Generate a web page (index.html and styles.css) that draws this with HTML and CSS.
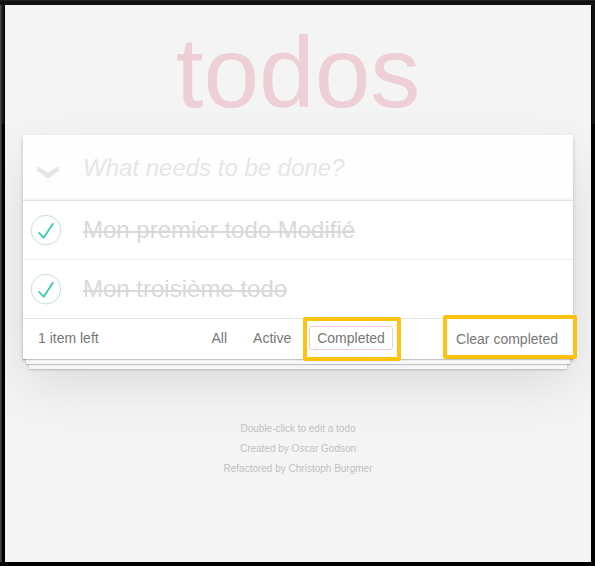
FILE: index.html
```html
<!DOCTYPE html>
<html lang="fr">
<head>
<meta charset="utf-8">
<title>todos</title>
<link rel="stylesheet" href="styles.css">
</head>
<body>
<div class="frame">
<div class="page">
  <h1>todos</h1>
  <section class="todoapp">
    <header class="new-todo">
      <svg class="toggle-all" viewBox="0 0 22 13"><path d="M0 0 11 6.5 22 0V5L11 12.5 0 5Z"/></svg>
      <span>What needs to be done?</span>
    </header>
    <ul class="todo-list">
      <li>
        <svg class="check" viewBox="-10 -18 100 135"><circle cx="50" cy="50" r="50"/><path d="M72 25L42 71 27 56l-4 4 20 20 34-52z"/></svg>
        <label>Mon premier todo Modifié</label>
      </li>
      <li>
        <svg class="check" viewBox="-10 -18 100 135"><circle cx="50" cy="50" r="50"/><path d="M72 25L42 71 27 56l-4 4 20 20 34-52z"/></svg>
        <label>Mon troisième todo</label>
      </li>
    </ul>
    <footer class="footer">
      <span class="count">1 item left</span>
      <nav class="filters">
        <a>All</a>
        <a>Active</a>
        <a class="selected">Completed</a>
      </nav>
      <span class="clear">Clear completed</span>
    </footer>
    <div class="mark mark-filter"></div>
    <div class="mark mark-clear"></div>
  </section>
  <div class="info">
    <p>Double-click to edit a todo</p>
    <p>Created by Oscar Godson</p>
    <p>Refactored by Christoph Burgmer</p>
  </div>
</div>
</div>
</body>
</html>
```
FILE: styles.css
```css
* { box-sizing: border-box; }
body, h1, ul, p { margin: 0; padding: 0; }
body {
  font: 14px/20px "Liberation Sans", Arial, sans-serif;
  color: #777;
  background: #000;
  overflow: hidden;
}
.frame {
  width: 595px;
  height: 566px;
  padding: 5px 4px 4px 5px;
  background:
    linear-gradient(#222, #222) 0 0 / 595px 1px no-repeat,
    linear-gradient(#111, #111) 0 1px / 595px 4px no-repeat,
    linear-gradient(#454545, #454545) 0 0 / 1px 562px no-repeat,
    linear-gradient(#303030, #303030) 1px 0 / 1px 562px no-repeat,
    linear-gradient(#151515, #151515) 2px 0 / 2px 124px no-repeat,
    linear-gradient(#111, #111) 592px 0 / 3px 124px no-repeat,
    #000;
}
.page {
  height: 557px;
  padding: 17px 18px 0;
  background: #f4f4f4;
  overflow: hidden;
}
h1 {
  height: 113px;
  font-size: 100px;
  line-height: 100px;
  font-weight: 400;
  text-align: center;
  color: rgba(204, 41, 73, .18);
}
.todoapp {
  position: relative;
  width: 550px;
  background: #fff;
  box-shadow: 0 2px 4px rgba(0, 0, 0, .2), 0 25px 50px rgba(0, 0, 0, .1);
}
.new-todo {
  display: flex;
  align-items: center;
  height: 65px;
  padding-left: 14px;
  font-size: 24px;
  line-height: 34px;
  font-style: italic;
  color: #e6e6e6;
  background: #fefefe;
  box-shadow: inset 0 -2px 1px rgba(0, 0, 0, .03);
}
.toggle-all {
  width: 22px;
  height: 13px;
  margin: 9px 24px 0 0;
  fill: #e6e6e6;
}
.todo-list {
  list-style: none;
  border-top: 1px solid #e0e0e0;
}
.todo-list li {
  display: flex;
  align-items: center;
  height: 59px;
  border-bottom: 1px solid #ededed;
  font-size: 24px;
  line-height: 29px;
  color: #d9d9d9;
}
.todo-list li:last-child { height: 58px; border-bottom: 0; }
.check { width: 40px; height: 40px; margin-right: 20px; }
.check circle { fill: none; stroke: #bddad5; stroke-width: 3; }
.check path { fill: #35c9b0; }
.todo-list label {
  height: 32px;
  padding-top: 0.5px;
  background: linear-gradient(#d9d9d9, #d9d9d9) 0 17px / 100% 2px no-repeat;
}
.footer {
  position: relative;
  display: grid;
  grid-template-columns: 165.5px 1fr auto;
  height: 41px;
  padding: 7px 15px 0;
  border-top: 1px solid #e6e6e6;
}
.footer::before {
  content: "";
  position: absolute;
  inset: auto 0 0;
  height: 50px;
  box-shadow: 0 1px 1px rgba(0, 0, 0, .2), 0 8px 0 -3px #f6f6f6,
    0 9px 1px -3px rgba(0, 0, 0, .2), 0 16px 0 -6px #f6f6f6,
    0 17px 2px -6px rgba(0, 0, 0, .2);
}
.count { padding-top: 2px; }
.filters { display: flex; gap: 10px; }
.filters a {
  height: 24px;
  padding: 1px 7px;
  border: 1px solid transparent;
  border-radius: 3px;
}
.filters .selected { width: 84px; border-color: #f0cdd4; }
.clear { padding-top: 3px; }
.mark {
  position: absolute;
  border: 4px solid #ffc20e;
  border-radius: 2px;
}
.mark-filter { left: 280px; top: 182px; width: 98px; height: 44px; }
.mark-clear { left: 420px; top: 180px; width: 134px; height: 44px; }
.info {
  margin-top: 60px;
  font-size: 10px;
  text-align: center;
  color: #bfbfbf;
  text-shadow: 0 1px 0 rgba(255, 255, 255, .5);
}
```
